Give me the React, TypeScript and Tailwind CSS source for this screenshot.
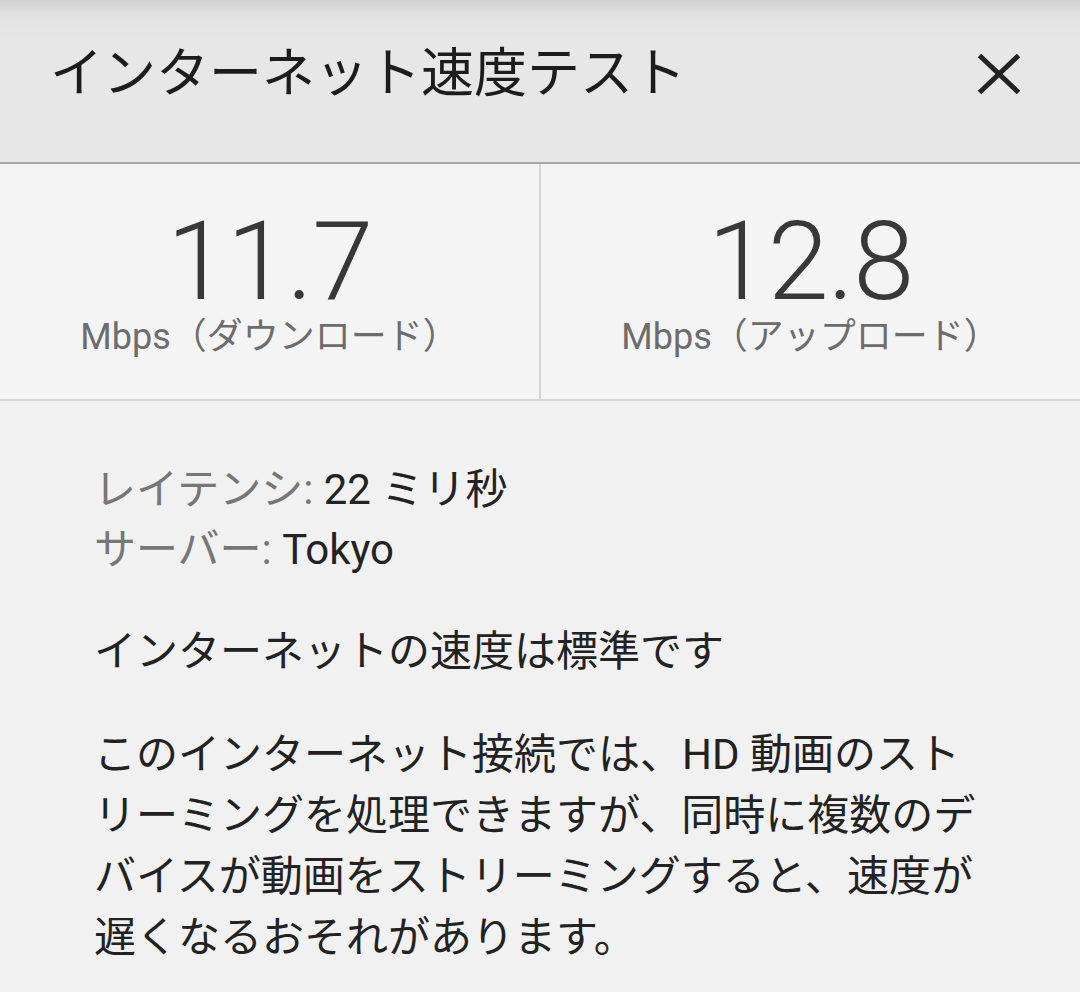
import React from "react";

const FONT = "font-['Roboto','Noto_Sans_CJK_JP',sans-serif]";

function Stat({ value, label }: { value: string; label: string }) {
  return (
    <div className="flex flex-1 flex-col items-center pt-[43px]">
      <div className="text-[110px] leading-[110px] font-light text-[#383838] tracking-[-1px]">
        {value}
      </div>
      <div className="text-[36px] leading-[40px] text-[#6c6c6c]">{label}</div>
    </div>
  );
}

export default function App() {
  return (
    <div className={`${FONT} flex h-[992px] w-[1080px] flex-col overflow-hidden bg-[#f1f1f1]`}>
      {/* Header */}
      <div className="flex h-[164px] shrink-0 items-center justify-between border-b-2 border-[#a6a6a6] bg-[linear-gradient(to_bottom,#d0d0d0_0px,#e2e2e2_14px,#e7e7e7_40px)] pb-[14px] pl-[50px] pr-[59px] shadow-[0_1px_3px_rgba(0,0,0,0.12)]">
        <h1 className="text-[53px] leading-[60px] font-normal text-[#1c1c1c]">
          インターネット速度テスト
        </h1>
        <svg width="44" height="42" viewBox="0 0 44 42" aria-label="close">
          <line x1="2.5" y1="2.5" x2="41.5" y2="39.5" stroke="#222" strokeWidth="5" />
          <line x1="41.5" y1="2.5" x2="2.5" y2="39.5" stroke="#222" strokeWidth="5" />
        </svg>
      </div>

      {/* Stats */}
      <div className="flex h-[237px] shrink-0 border-b-2 border-[#d6d6d6] bg-[#f4f4f4]">
        <Stat value="11.7" label="Mbps（ダウンロード）" />
        <div className="w-[2px] bg-[#d4d4d4]" />
        <Stat value="12.8" label="Mbps（アップロード）" />
      </div>

      {/* Body */}
      <div className="flex flex-1 flex-col pl-[94px] pt-[59px] text-[42px] text-[#222]">
        <div className="leading-[60px]">
          <span className="text-[#767676]">レイテンシ: </span>
          <span>22 ミリ秒</span>
        </div>
        <div className="leading-[60px]">
          <span className="text-[#767676]">サーバー: </span>
          <span>Tokyo</span>
        </div>
        <div className="mt-[42px] leading-[60px]">インターネットの速度は標準です</div>
        <div className="mt-[42px] leading-[61px]">
          <div>このインターネット接続では、HD 動画のスト</div>
          <div>リーミングを処理できますが、同時に複数のデ</div>
          <div>バイスが動画をストリーミングすると、速度が</div>
          <div>遅くなるおそれがあります。</div>
        </div>
      </div>
    </div>
  );
}
